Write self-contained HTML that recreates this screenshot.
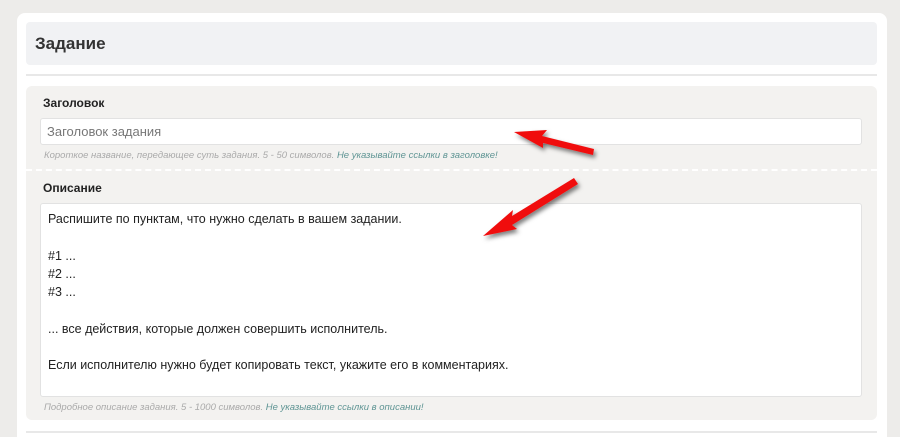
<!DOCTYPE html>
<html><head><meta charset="utf-8"><style>
html,body{margin:0;width:900px;height:437px;overflow:hidden}
body{background:#edecea;font-family:"Liberation Sans","DejaVu Sans",sans-serif;position:relative}
.card{position:absolute;left:17px;top:13px;width:870px;height:440px;background:#fff;border-radius:8px}
.hdr{position:absolute;left:26px;top:22px;width:851px;height:43px;background:#f1f2f4;border-radius:4px}
.hdr span{position:absolute;left:9px;top:12px;font-size:17px;font-weight:bold;color:#333}
.line{position:absolute;left:26px;width:851px;height:2px;background:#e8e8e8}
.panel{position:absolute;left:26px;top:86px;width:851px;height:334px;background:#f3f2f0;border-radius:6px}
.lbl{position:absolute;left:43px;font-size:12px;font-weight:bold;color:#222}
.inp{position:absolute;left:40px;width:820px;background:#fff;border:1px solid #e2e2e2;border-radius:3px}
.hint{position:absolute;left:44px;font-size:9.5px;font-style:italic;color:#aaa}
.hint b{color:#5f9594;font-weight:normal}
.ta{font-size:12.5px;color:#222;line-height:18.3px;padding:6px 7px;box-sizing:border-box;white-space:pre;width:822px}
</style></head><body>
<div class="card"></div>
<div class="hdr"><span>Задание</span></div>
<div class="line" style="top:74px"></div>
<div class="panel"></div>
<div class="lbl" style="top:96px">Заголовок</div>
<div class="inp" style="top:118px;height:25px"><span style="position:absolute;left:6px;top:5px;font-size:13px;color:#777">Заголовок задания</span></div>
<div class="hint" style="top:150px">Короткое название, передающее суть задания. 5 - 50 символов. <b>Не указывайте ссылки в заголовке!</b></div>
<div style="position:absolute;left:26px;top:169px;width:851px;border-top:2px dashed #fff"></div>
<div class="lbl" style="top:181px">Описание</div>
<div class="inp ta" style="top:203px;height:194px">Распишите по пунктам, что нужно сделать в вашем задании.

#1 ...
#2 ...
#3 ...

... все действия, которые должен совершить исполнитель.

Если исполнителю нужно будет копировать текст, укажите его в комментариях.</div>
<div class="hint" style="top:402px">Подробное описание задания. 5 - 1000 символов. <b>Не указывайте ссылки в описании!</b></div>
<div class="line" style="top:431px"></div>
<svg width="900" height="437" style="position:absolute;left:0;top:0">
<defs><filter id="s"><feDropShadow dx="2" dy="3" stdDeviation="2" flood-color="#000" flood-opacity="0.5"/></filter></defs>
<g filter="url(#s)" fill="#f01010">
<path d="M594,149 L542,136 L547,130 L514,132 L543,148 L543,143 L593,155 Z"/>
<path d="M574,178 L512,216 L513,210 L483,236 L517,229 L512,225 L578,184 Z"/>
</g>
</svg>
</body></html>
